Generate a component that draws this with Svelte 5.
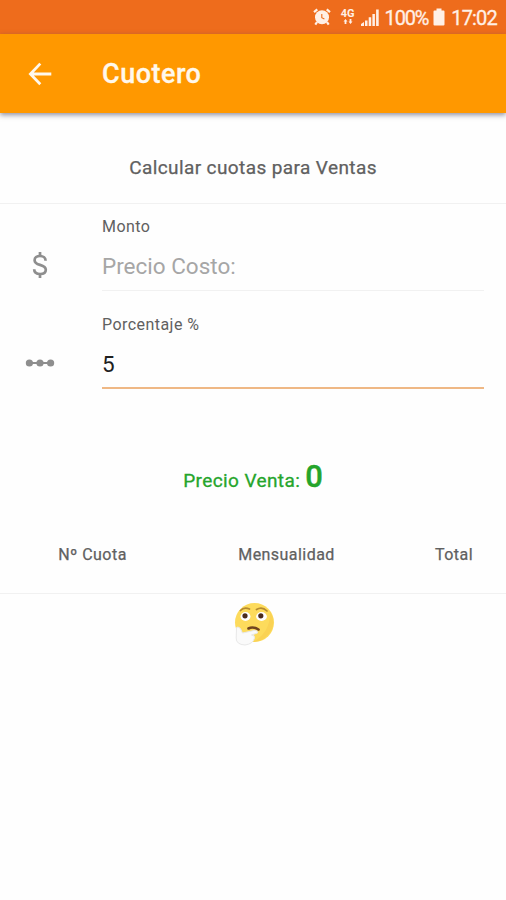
<script>
    let monto = $state('');
    let porcentaje = $state('5');

    const columns = ['Nº Cuota', 'Mensualidad', 'Total'];

    let precioVenta = $derived(
        monto === '' ? 0 : Number(monto) * (1 + Number(porcentaje) / 100)
    );
</script>

<div class="screen">
    <div class="status-bar">
        <svg class="alarm" width="18" height="18" viewBox="0 0 18 18">
            <circle cx="9" cy="9.3" r="7" fill="currentColor" />
            <path d="M1 4.2L4.3 1.4M17 4.2L13.7 1.4M4 14.2L2.3 16.6M14 14.2L15.7 16.6" stroke="currentColor" stroke-width="2.2" />
            <path d="M8.8 6V9.7L11.4 11" fill="none" stroke="#ee6c1c" stroke-width="1.1" />
        </svg>
        <div class="network">
            <span>4G</span>
            <svg width="10" height="6" viewBox="0 0 10 6" fill="currentColor">
                <path d="M0.5 2.5L2.5 0L4.5 2.5H3.4V5H1.6V2.5ZM5.5 2.5H6.6V0H8.4V2.5H9.5L7.5 5Z" />
            </svg>
        </div>
        <svg class="signal" width="18" height="17" viewBox="0 0 18 17" fill="currentColor">
            <path d="M0 17V15L3 13V17ZM4 17V11.5H6.5V17ZM7.7 17V8.2H10.2V17ZM11.4 17V5H13.9V17ZM15.1 17V0.5H17.7V17Z" />
        </svg>
        <span class="battery-text">100%</span>
        <svg class="battery" width="12" height="18" viewBox="0 0 12 18" fill="currentColor">
            <path d="M3.5 0.5H8.5V2.5H10.5Q11.5 2.5 11.5 3.5V16.5Q11.5 17.5 10.5 17.5H1.5Q0.5 17.5 0.5 16.5V3.5Q0.5 2.5 1.5 2.5H3.5Z" />
        </svg>
        <span class="clock">17:02</span>
    </div>

    <header class="app-bar">
        <button class="back" type="button" aria-label="Volver">
            <svg width="24" height="24" viewBox="0 0 24 24" fill="none" stroke="currentColor" stroke-width="2.8">
                <path d="M12.3 1.6L2.4 12L12.3 22.2M2.4 12H23.3" />
            </svg>
        </button>
        <h1>Cuotero</h1>
    </header>

    <h2><span>Calcular cuotas para Ventas</span></h2>

    <div class="field">
        <div class="icon">
            <svg width="16" height="28" viewBox="0 0 16 28" fill="none" stroke="currentColor" stroke-width="2.7">
                <path d="M8 1V5M8 23V27" />
                <path d="M13.6 9.8C13.6 6.7 11.4 5 8 5C4.8 5 2.6 6.7 2.6 9.2C2.6 12 5 13 8 13.9C11.4 14.9 13.8 15.9 13.8 18.8C13.8 21.5 11.4 23 8.2 23C4.6 23 2.2 21.3 2.2 18.2" />
            </svg>
        </div>
        <div class="control">
            <label for="monto">Monto</label>
            <input id="monto" type="text" inputmode="decimal" placeholder="Precio Costo:" bind:value={monto} />
        </div>
    </div>

    <div class="field second">
        <div class="icon">
            <svg width="30" height="10" viewBox="0 0 30 10" fill="currentColor">
                <path d="M4 4H26V6H4Z" />
                <circle cx="4.4" cy="5" r="3.6" />
                <circle cx="15" cy="5" r="3.6" />
                <circle cx="25.6" cy="5" r="3.6" />
            </svg>
        </div>
        <div class="control active">
            <label for="porcentaje">Porcentaje %</label>
            <input id="porcentaje" type="text" inputmode="decimal" bind:value={porcentaje} />
        </div>
    </div>

    <div class="result">
        <span class="result-label">Precio Venta:</span>
        <strong>{precioVenta}</strong>
    </div>

    <div class="table-head">
        {#each columns as column}
            <span>{column}</span>
        {/each}
    </div>

    <div class="empty">
        <svg width="42" height="44" viewBox="0 0 42 44">
            <circle cx="21.5" cy="20.5" r="19.5" fill="#fddb5c" />
            <path d="M37 9Q45 24 33 35Q27 40 20 40Q38 30 37 9Z" fill="#f8c94c" opacity="0.5" />
            <path d="M7.5 8.5Q11 4.5 16.5 7M23.5 7.5Q29 4 34 9" fill="none" stroke="#b58a30" stroke-width="1.7" stroke-linecap="round" />
            <ellipse cx="12.5" cy="14.5" rx="5" ry="4.4" fill="#fff" />
            <ellipse cx="28.5" cy="14.5" rx="5.4" ry="4.4" fill="#fff" />
            <circle cx="12" cy="13.8" r="2.6" fill="#4b2c1c" />
            <circle cx="27.8" cy="13.8" r="2.6" fill="#4b2c1c" />
            <path d="M15.5 26.5Q20 24 25.5 27.5" fill="none" stroke="#70451f" stroke-width="2.6" stroke-linecap="round" />
            <path d="M3.5 27Q3 25 5 25Q7.5 25 9.5 31L21 28.5Q25 28 24.5 31L18.5 33Q22 33 21.5 36Q20 42 12 43Q3 42.5 3.2 36Z" fill="#fafafa" stroke="#e8e8e8" stroke-width="1" />
        </svg>
    </div>
</div>

<style>
    :global(body) {
        margin: 0;
        background: #fefefe;
    }

    .screen {
        width: 506px;
        height: 900px;
        overflow: hidden;
        background: #fefefe;
        color: #606060;
        font-family: Roboto, sans-serif;
    }

    .status-bar {
        display: flex;
        align-items: center;
        height: 34px;
        padding-right: 9px;
        box-sizing: border-box;
        justify-content: flex-end;
        background: #ee6c1c;
        color: #fff0e6;
        font-size: 20px;
    }

    .alarm {
        margin-right: 9px;
    }

    .network {
        display: flex;
        flex-direction: column;
        align-items: center;
        width: 16px;
        margin-right: 5px;
        font-size: 11px;
        font-weight: 700;
        line-height: 10px;
    }

    .signal {
        margin-right: 6px;
    }

    .battery {
        margin: 0 6px 0 5px;
    }

    .battery-text,
    .clock {
        padding-top: 2px;
        line-height: 34px;
        -webkit-text-stroke: 0.3px;
    }

    .battery-text {
        letter-spacing: -1.2px;
    }

    .clock {
        letter-spacing: -0.8px;
    }

    .app-bar {
        display: flex;
        align-items: center;
        height: 79px;
        background: #ff9800;
        color: #fff8ec;
        box-shadow: 0 2px 5px rgba(70, 70, 100, 0.6);
    }

    .back {
        display: flex;
        width: 102px;
        padding: 0 0 0 28px;
        border: none;
        background: none;
        color: inherit;
        cursor: pointer;
    }

    h1 {
        margin: 0;
        font-size: 27px;
        font-weight: 500;
        letter-spacing: 0.5px;
        -webkit-text-stroke: 0.3px;
    }

    h2 {
        display: flex;
        align-items: center;
        justify-content: center;
        height: 91px;
        padding-top: 18px;
        margin: 0;
        box-sizing: border-box;
        border-bottom: 1px solid #f1f1f1;
        font-size: 19px;
        font-weight: 400;
        letter-spacing: 0.4px;
        -webkit-text-stroke: 0.25px;
    }

    .field {
        display: flex;
        height: 87px;
        padding-right: 22px;
    }

    .field.second {
        margin-top: 11px;
    }

    .icon {
        display: flex;
        align-items: center;
        justify-content: center;
        width: 80px;
        height: 40px;
        margin: 41px 22px 0 0;
        color: #8e8e8e;
        flex-shrink: 0;
    }

    .control {
        display: flex;
        flex: 1;
        flex-direction: column;
        border-bottom: 1px solid #f1f1f1;
    }

    .control.active {
        border-bottom: 2px solid #efb885;
    }

    label {
        margin-top: 12px;
        font-size: 16px;
        line-height: 22px;
        letter-spacing: 0.45px;
    }

    input {
        width: 100%;
        height: 34px;
        margin-top: 11px;
        padding: 0;
        border: none;
        outline: none;
        background: transparent;
        color: #202020;
        font-family: inherit;
        font-size: 22.5px;
    }

    input::placeholder {
        color: #a6a6a6;
        opacity: 1;
    }

    .result {
        display: flex;
        align-items: baseline;
        justify-content: center;
        gap: 5px;
        height: 73px;
        margin-top: 69px;
        color: #25a52b;
        font-size: 19px;
    }

    .result-label {
        letter-spacing: 0.4px;
        -webkit-text-stroke: 0.3px;
    }

    .result strong {
        font-size: 31px;
        font-weight: 500;
        -webkit-text-stroke: 0.4px;
    }

    .table-head {
        display: grid;
        grid-template-columns: 185px 203px 1fr;
        height: 63px;
        padding-top: 13px;
        box-sizing: border-box;
        border-bottom: 1px solid #f1f1f1;
        font-size: 16px;
        line-height: 22px;
        letter-spacing: 0.45px;
        text-align: center;
        -webkit-text-stroke: 0.25px;
    }

    .table-head span:last-child {
        padding-left: 14px;
    }

    .empty {
        display: flex;
        justify-content: center;
        padding: 8px 0 0 1px;
    }
</style>
